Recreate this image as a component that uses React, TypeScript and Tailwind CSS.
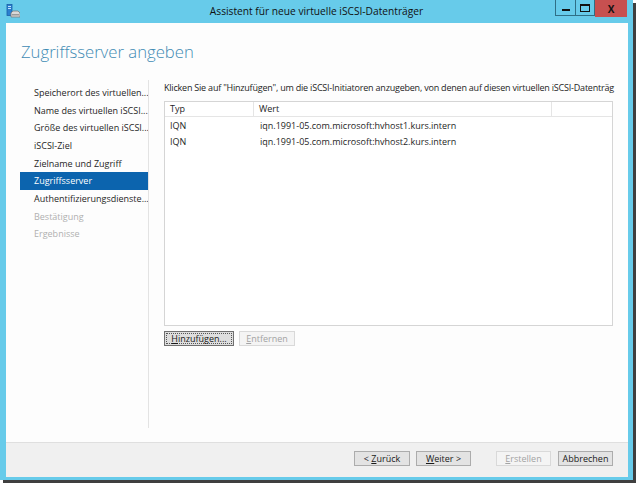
import React from "react";

const F = { fontFamily: "'Open Sans', 'Noto Sans', sans-serif" };

function Btn({
  children,
  w,
  disabled,
  focused,
}: {
  children: React.ReactNode;
  w: string;
  disabled?: boolean;
  focused?: boolean;
}) {
  const base =
    "h-[15px] flex items-center justify-center text-[9px] leading-none border box-border";
  if (disabled)
    return (
      <div className={`${base} ${w} border-[#d9d9d9] bg-[#f4f4f4] text-[#a3a3a3]`}>{children}</div>
    );
  if (focused)
    return (
      <div className={`${base} ${w} border-[#6f6f6f] bg-[#dedede] text-[#1a1a1a] p-[1px]`}>
        <div className="w-full h-full border border-dotted border-[#555] flex items-center justify-center">
          {children}
        </div>
      </div>
    );
  return (
    <div className={`${base} ${w} border-[#acacac] bg-[#e3e3e3] text-[#1a1a1a]`}>{children}</div>
  );
}

const navItems: { t: string; s?: boolean; d?: boolean }[] = [
  { t: "Speicherort des virtuellen..." },
  { t: "Name des virtuellen iSCSI..." },
  { t: "Größe des virtuellen iSCSI..." },
  { t: "iSCSI-Ziel" },
  { t: "Zielname und Zugriff" },
  { t: "Zugriffsserver", s: true },
  { t: "Authentifizierungsdienste..." },
  { t: "Bestätigung", d: true },
  { t: "Ergebnisse", d: true },
];

export default function App() {
  return (
    <div className="w-[638px] h-[484px] bg-white overflow-hidden" style={F}>
      <div className="w-[633px] h-[480px] bg-[#67cbea] flex flex-col shadow-[3px_3px_0_0_#3f3f3f]">
        {/* title bar */}
        <div className="h-[23px] grid grid-cols-[1fr_auto_1fr] items-start">
          <div className="pl-[6px] pt-[4px]">
            <svg width="14" height="14" viewBox="0 0 14 14">
              <rect x="1" y="0.5" width="5" height="11" fill="#2a7fd0" stroke="#1b5fa8" strokeWidth="0.8" />
              <rect x="2" y="2" width="3" height="1" fill="#bfe2ff" />
              <rect x="2" y="4" width="3" height="1" fill="#bfe2ff" />
              <path d="M5 9 L7 7 H12 L14 9 V13 H5 Z" fill="#d9d9d9" stroke="#7c7c7c" strokeWidth="0.8" />
              <rect x="6" y="10" width="7" height="1.5" fill="#9a9a9a" />
            </svg>
          </div>
          <div className="text-[10.2px] leading-none text-[#111] pt-[6px] whitespace-nowrap">
            Assistent für neue virtuelle iSCSI-Datenträger
          </div>
          <div className="flex justify-end pr-[6px]">
            <div className="w-[21px] h-[16px] border-x border-b border-[#2f6f86] flex items-end justify-center pb-[4px]">
              <div className="w-[8px] h-[2px] bg-[#111]" />
            </div>
            <div className="w-[19px] h-[16px] border-r border-b border-[#2f6f86] flex items-center justify-center">
              <div className="w-[10px] h-[8px] border border-t-[2px] border-[#111]" />
            </div>
            <div className="w-[32px] h-[17px] bg-[#c75050] flex items-center justify-center text-[10px] font-bold text-[#111] leading-none">
              X
            </div>
          </div>
        </div>
        {/* client */}
        <div className="ml-[6px] mr-[5px] h-[454px] bg-[#fdfdfd] flex flex-col">
          <div className="h-[57px] pl-[15px] pt-[17px]">
            <div className="text-[16.7px] leading-[24px] font-light text-[#3f8bb4]">Zugriffsserver angeben</div>
          </div>
          <div className="h-[348px] flex">
            <div className="ml-[14px] w-[128px] pt-[4px] border-r border-[#e3e3e3] box-content">
              {navItems.map((n) => (
                <div
                  key={n.t}
                  className={`h-[17.67px] flex items-center pl-[14px] text-[9px] whitespace-nowrap overflow-hidden ${
                    n.s ? "bg-[#0c64ae] text-white" : n.d ? "text-[#b0b0b0]" : "text-[#262626]"
                  }`}
                >
                  {n.t}
                </div>
              ))}
            </div>
            <div className="flex-1 pl-[15px] pr-[15px] flex flex-col min-w-0">
              <div className="mt-[1px] h-[14px] flex items-center text-[9px] tracking-[-0.21px] text-[#1e1e1e] whitespace-nowrap">
                Klicken Sie auf "Hinzufügen", um die iSCSI-Initiatoren anzugeben, von denen auf diesen virtuellen iSCSI-Datenträg
              </div>
              <div className="mt-[6px] h-[225px] border border-[#d5d5d5] bg-white flex flex-col text-[9px] text-[#1e1e1e]">
                <div className="h-[15px] flex border-b border-[#e5e5e5] shrink-0">
                  <div className="w-[89px] border-r border-[#e5e5e5] pl-[5px] flex items-center">Typ</div>
                  <div className="w-[298px] border-r border-[#e5e5e5] pl-[5px] flex items-center">Wert</div>
                  <div className="flex-1" />
                </div>
                {[
                  "iqn.1991-05.com.microsoft:hvhost1.kurs.intern",
                  "iqn.1991-05.com.microsoft:hvhost2.kurs.intern",
                ].map((v, i) => (
                  <div key={v} className={`h-[16px] flex items-center ${i === 0 ? "mt-[1px]" : ""}`}>
                    <div className="w-[89px] pl-[5px]">IQN</div>
                    <div className="pl-[6px]">{v}</div>
                  </div>
                ))}
              </div>
              <div className="mt-[5px] flex gap-[5px]">
                <Btn w="w-[70px]" focused>
                  <span>
                    <span className="underline">H</span>inzufügen...
                  </span>
                </Btn>
                <Btn w="w-[56px]" disabled>
                  <span>
                    <span className="underline">E</span>ntfernen
                  </span>
                </Btn>
              </div>
            </div>
          </div>
          <div className="h-[14px]" />
          <div className="h-[35px] bg-[#f0f0f0] border-t border-[#dfdfdf] flex justify-end items-start pt-[8px] pr-[15px]">
            <Btn w="w-[56px]">
              <span>
                &lt; <span className="underline">Z</span>urück
              </span>
            </Btn>
            <div className="w-[6px]" />
            <Btn w="w-[55px]">
              <span>
                <span className="underline">W</span>eiter &gt;
              </span>
            </Btn>
            <div className="w-[25px]" />
            <Btn w="w-[55px]" disabled>
              <span>
                <span className="underline">E</span>rstellen
              </span>
            </Btn>
            <div className="w-[7px]" />
            <Btn w="w-[55px]">Abbrechen</Btn>
          </div>
        </div>
      </div>
    </div>
  );
}
